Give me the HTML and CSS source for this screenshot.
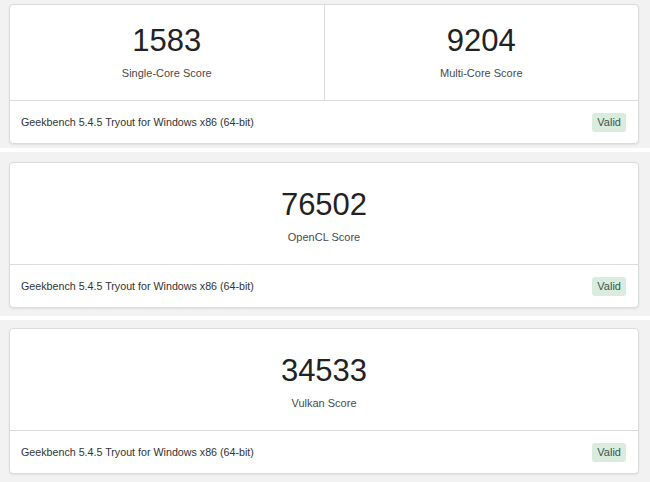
FILE: index.html
```html
<!DOCTYPE html>
<html>
<head>
<meta charset="utf-8">
<link rel="stylesheet" href="styles.css">
</head>
<body>
<div class="stack">
  <section class="panel panel-first">
    <div class="card">
      <div class="scores">
        <div class="score">
          <div class="value">1583</div>
          <div class="label">Single-Core Score</div>
        </div>
        <div class="score score-split">
          <div class="value">9204</div>
          <div class="label">Multi-Core Score</div>
        </div>
      </div>
      <div class="footer">
        <span class="version">Geekbench 5.4.5 Tryout for Windows x86 (64-bit)</span>
        <span class="badge">Valid</span>
      </div>
    </div>
  </section>
  <section class="panel panel-mid">
    <div class="card card-tall">
      <div class="scores">
        <div class="score">
          <div class="value">76502</div>
          <div class="label">OpenCL Score</div>
        </div>
      </div>
      <div class="footer">
        <span class="version">Geekbench 5.4.5 Tryout for Windows x86 (64-bit)</span>
        <span class="badge">Valid</span>
      </div>
    </div>
  </section>
  <section class="panel panel-last">
    <div class="card card-tall">
      <div class="scores">
        <div class="score">
          <div class="value">34533</div>
          <div class="label">Vulkan Score</div>
        </div>
      </div>
      <div class="footer">
        <span class="version">Geekbench 5.4.5 Tryout for Windows x86 (64-bit)</span>
        <span class="badge">Valid</span>
      </div>
    </div>
  </section>
</div>
</body>
</html>
```
FILE: styles.css
```css
* { box-sizing: border-box; }
html, body {
  margin: 0;
  padding: 0;
  background: #ffffff;
  font-family: "Liberation Sans", Arial, sans-serif;
}
.stack {
  display: flex;
  flex-direction: column;
  gap: 4px;
  width: 650px;
  height: 482px;
  overflow: hidden;
}
.panel {
  background: #f2f2f2;
  padding-left: 9px;
  padding-right: 11px;
}
.panel-first { padding-top: 4px; padding-bottom: 4px; }
.panel-mid { padding-top: 10px; padding-bottom: 8px; }
.panel-last { padding-top: 8px; padding-bottom: 8px; }
.card {
  background: #ffffff;
  border: 1px solid #dcdcdc;
  border-radius: 4px;
  box-shadow: 0 1px 2px rgba(0, 0, 0, 0.08);
  display: flex;
  flex-direction: column;
}
.scores {
  display: flex;
  border-bottom: 1px solid #dcdcdc;
}
.score {
  flex: 1;
  display: flex;
  flex-direction: column;
  align-items: center;
  gap: 4px;
  padding-top: 16px;
  padding-bottom: 19px;
}
.card-tall .score { padding-top: 22px; }
.score-split { border-left: 1px solid #dcdcdc; }
.value {
  font-size: 31px;
  line-height: 40px;
  color: #222222;
}
.label {
  font-size: 11px;
  line-height: 16px;
  color: #4a4a4a;
}
.footer {
  height: 42px;
  display: flex;
  align-items: center;
  justify-content: space-between;
  padding: 0 12px 0 11px;
}
.version {
  font-size: 10.7px;
  color: #333333;
}
.badge {
  background: #d9ecdd;
  color: #3f5547;
  font-size: 11px;
  line-height: 19px;
  height: 19px;
  padding: 0 5px;
  border-radius: 3px;
}
```
